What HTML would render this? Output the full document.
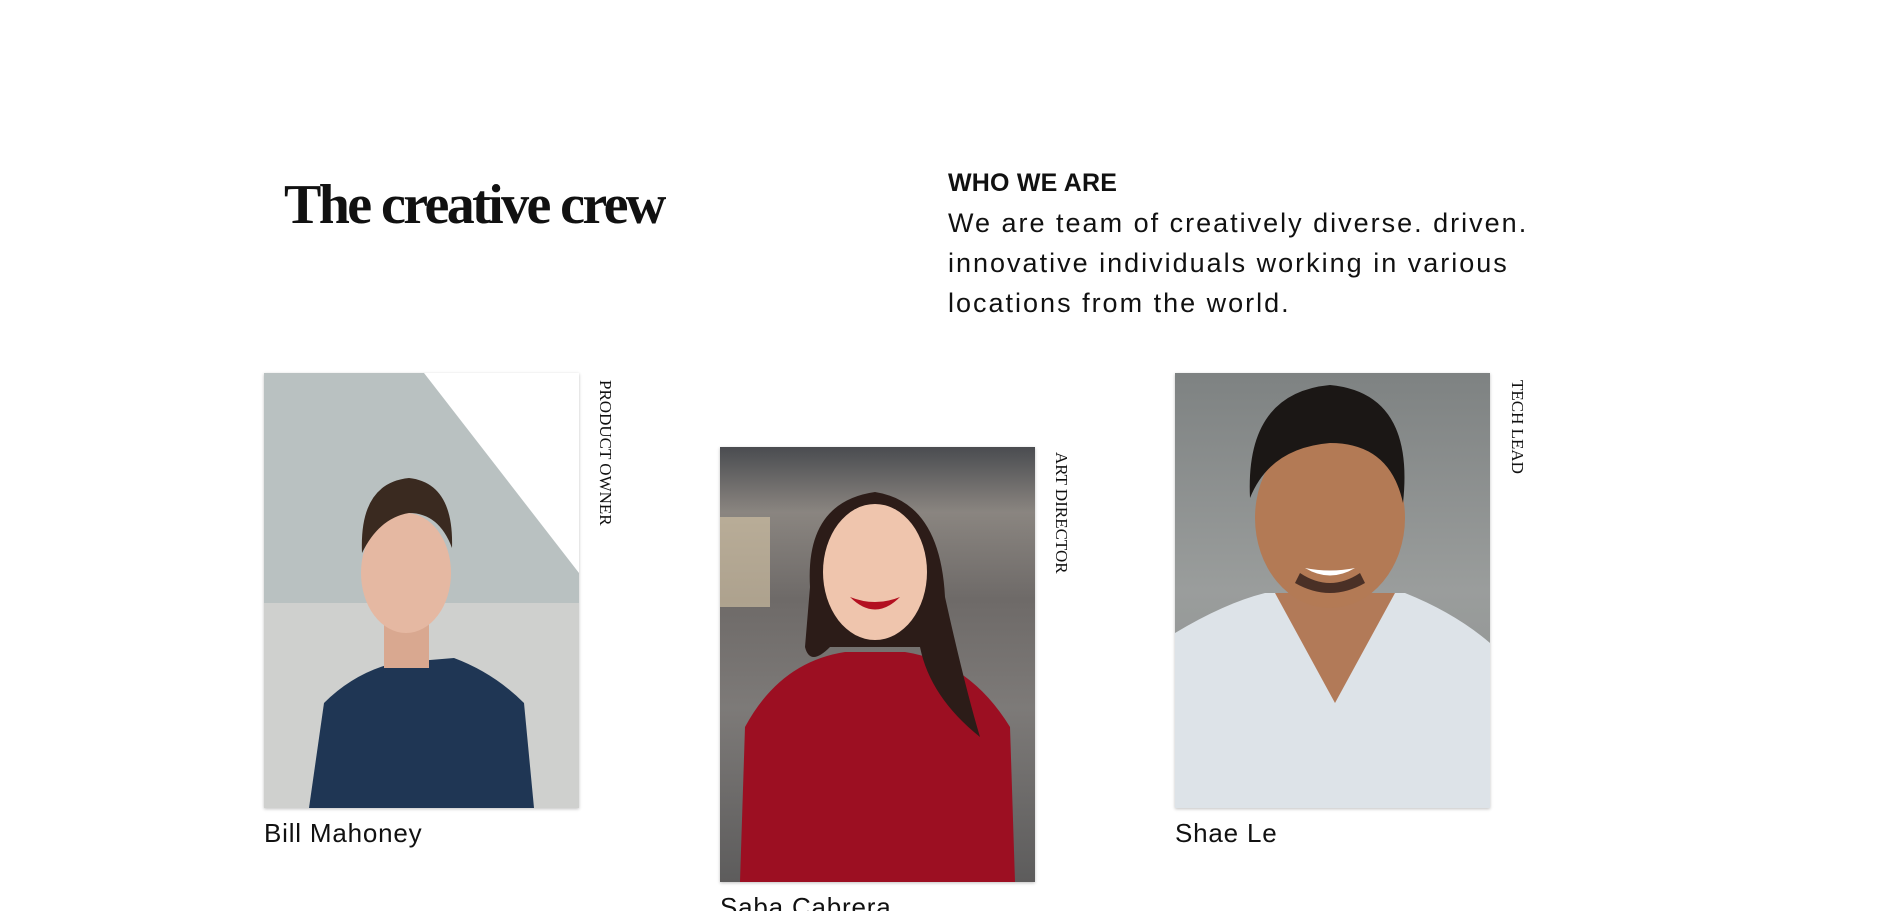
<!DOCTYPE html>
<html><head><meta charset="utf-8"><style>
html,body{margin:0;padding:0;background:#fff;width:1884px;height:911px;overflow:hidden;position:relative;font-family:"Liberation Sans",sans-serif;color:#111}
.h1{position:absolute;left:284px;top:170px;font-family:"Liberation Serif",serif;font-weight:bold;font-size:56px;letter-spacing:-2.6px;line-height:70px;white-space:nowrap}
.who{position:absolute;left:948px;top:168px;font-size:25px;font-weight:bold;letter-spacing:0.2px;line-height:30px}
.body{position:absolute;left:948px;top:203px;font-size:27px;line-height:40px;width:700px;letter-spacing:2px;white-space:nowrap}
.card{position:absolute;width:315px;height:435px;box-shadow:0 1px 3px rgba(0,0,0,.25);overflow:hidden}
.lab{position:absolute;font-family:"Liberation Serif",serif;font-size:17px;writing-mode:vertical-rl;white-space:nowrap}
.name{position:absolute;font-size:26px;letter-spacing:0.8px;white-space:nowrap}
</style></head><body>
<div class="h1">The creative crew</div>
<div class="who">WHO WE ARE</div>
<div class="body">We are team of creatively diverse. driven.<br>innovative individuals working in various<br>locations from the world.</div>

<div class="card" style="left:264px;top:373px;background:#b9c1c1">
<svg width="315" height="435" style="position:absolute;left:0;top:0">
<rect x="0" y="230" width="315" height="205" fill="#cfd0ce"/>
<polygon points="160,0 315,0 315,200" fill="#fff"/>
<path d="M45 435 L60 330 Q90 300 130 290 L190 285 Q230 300 260 330 L270 435 Z" fill="#1f3654"/>
<rect x="120" y="240" width="45" height="55" fill="#d9a890"/>
<ellipse cx="142" cy="200" rx="45" ry="60" fill="#e5b8a2"/>
<path d="M98 180 Q95 110 145 105 Q190 110 188 175 Q175 140 145 140 Q115 145 98 180Z" fill="#3a2a20"/>
</svg></div>
<div class="lab" style="left:595px;top:380px">PRODUCT OWNER</div>
<div class="name" style="left:264px;top:818px">Bill Mahoney</div>

<div class="card" style="left:720px;top:447px;background:linear-gradient(180deg,#4a4c50 0%,#8a8580 15%,#6e6a68 35%,#7d7a78 60%,#5d5c5c 100%)">
<svg width="315" height="435" style="position:absolute;left:0;top:0">
<rect x="0" y="70" width="50" height="90" fill="#d8c8a8" opacity=".6"/>
<path d="M20 435 L25 280 Q60 215 125 205 L185 205 Q250 215 290 280 L295 435Z" fill="#9c0f22"/>
<path d="M90 140 Q85 55 155 45 Q220 55 225 150 Q245 240 260 290 Q210 250 200 200 L110 200 Q90 220 85 200Z" fill="#2c1c18"/>
<ellipse cx="155" cy="125" rx="52" ry="68" fill="#efc5ad"/>
<path d="M130 150 Q155 175 180 150 Q155 160 130 150Z" fill="#b31020"/>
</svg></div>
<div class="lab" style="left:1051px;top:452px">ART DIRECTOR</div>
<div class="name" style="left:720px;top:892px">Saba Cabrera</div>

<div class="card" style="left:1175px;top:373px;background:linear-gradient(180deg,#7e8282,#9a9d9c 50%,#8a8d8c)">
<svg width="315" height="435" style="position:absolute;left:0;top:0">
<path d="M0 435 L0 260 Q50 230 90 220 L230 220 Q280 240 315 270 L315 435Z" fill="#dde3e8"/>
<path d="M100 220 L160 330 L220 220Z" fill="#b27a58"/>
<ellipse cx="155" cy="145" rx="75" ry="90" fill="#b37a55"/>
<path d="M75 125 Q70 20 155 12 Q240 20 228 130 Q215 70 155 70 Q95 75 75 125Z" fill="#1b1715"/>
<path d="M120 210 Q155 230 190 210 L185 200 Q155 220 125 200Z" fill="#4a3026"/>
<path d="M130 195 Q155 210 180 195 Q155 200 130 195Z" fill="#fff"/>
</svg></div>
<div class="lab" style="left:1507px;top:380px">TECH LEAD</div>
<div class="name" style="left:1175px;top:818px">Shae Le</div>
</body></html>
